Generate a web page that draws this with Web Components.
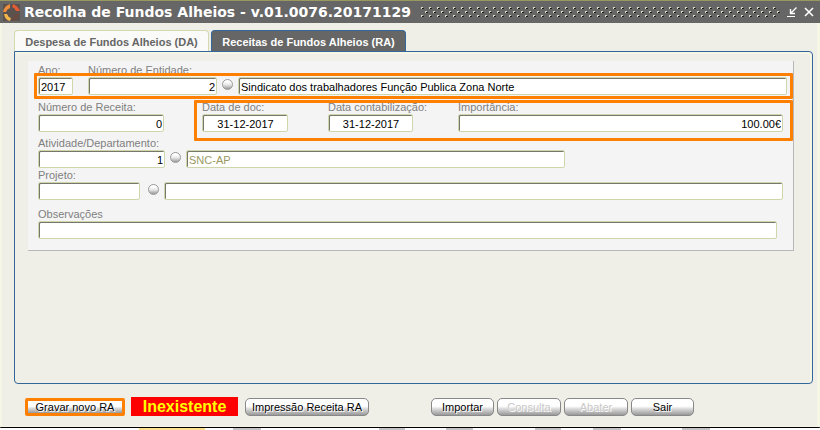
<!DOCTYPE html>
<html lang="pt">
<head>
<meta charset="utf-8">
<title>Recolha de Fundos Alheios</title>
<style>
  body { margin: 0; font-family: "Liberation Sans", Arial, sans-serif; font-size: 11px; background: #fff; }
  .grow { flex: 1; min-width: 0; }
</style>
</head>
<body>
<app-window>
  <title-bar slot="title">Recolha de Fundos Alheios - v.01.0076.20171129</title-bar>
  <tab-panel>
    <form-panel>
      <field-row style="--frame-inset: 10px 0 -4px -4px; --after: 5px; --end: 6px" framed>
        <text-field label="Ano:" value="2017" style="--w: 35px; margin-right: 15px"></text-field>
        <text-field label="Número de Entidade:" value="2" text="right" style="--w: 129px"></text-field>
        <lookup-button label="Procurar entidade"></lookup-button>
        <text-field class="grow" name="Nome da entidade" value="Sindicato dos trabalhadores Função Publica Zona Norte"></text-field>
      </field-row>
      <field-row style="--after: 4px; --end: 10px">
        <text-field label="Número de Receita:" value="0" text="right" style="--w: 126px; margin-right: 38px"></text-field>
        <field-row class="grow" style="--frame-inset: 0 -10px -9px -8px; --after: 0px; --end: 0px" framed>
          <text-field label="Data de doc:" value="31-12-2017" text="center" style="--w: 86px; margin-right: 40px"></text-field>
          <text-field label="Data contabilização:" value="31-12-2017" text="center" style="--w: 85px; margin-right: 45px"></text-field>
          <text-field class="grow" label="Importância:" value="100.00€" text="right"></text-field>
        </field-row>
      </field-row>
      <field-row style="--end: 228px">
        <text-field label="Atividade/Departamento:" value="1" text="right" style="--w: 127px"></text-field>
        <lookup-button label="Procurar departamento"></lookup-button>
        <text-field class="grow" name="Nome do departamento" value="SNC-AP" muted></text-field>
      </field-row>
      <field-row style="--after: 7px; --end: 10px">
        <text-field label="Projeto:" style="--w: 102px; margin-right: 3px"></text-field>
        <lookup-button label="Procurar projeto"></lookup-button>
        <text-field class="grow" name="Nome do projeto"></text-field>
      </field-row>
      <field-row style="--end: 16px">
        <text-field class="grow" label="Observações"></text-field>
      </field-row>
    </form-panel>
  </tab-panel>
  <action-bar slot="actions">
    <action-button style="--w: 100px" marked>Gravar novo RA</action-button>
    <status-label>Inexistente</status-label>
    <action-button style="--w: 124px; margin-right: 59px">Impressão Receita RA</action-button>
    <action-button style="--w: 63px">Importar</action-button>
    <action-button style="--w: 64px" disabled>Consulta</action-button>
    <action-button style="--w: 64px" disabled>Abater</action-button>
    <action-button style="--w: 63px">Sair</action-button>
  </action-bar>
</app-window>

<script>
const define = (name, render) => customElements.define(name, class extends HTMLElement {
  connectedCallback() {
    if (this.shadowRoot) return;
    this.attachShadow({ mode: 'open' }).innerHTML = render(this);
  }
});

define('app-window', () => `
  <style>
    :host { display: flex; flex-direction: column; min-height: 100vh; }
    main { flex: 1; display: flex; flex-direction: column; background: #efefe8;
      border: solid #f6f6e6; border-width: 0 3px 1px 2px; }
    .edge { height: 1px; background: #000; border-radius: 0 0 2px 2px; }
    .behind { height: 2px; background: linear-gradient(90deg,
      #fff 139px, #ffe08c 139px 205px, #fff 205px 233px, #c4c4c4 233px 261px,
      #fff 261px 379px, #c4c4c4 379px 405px, #fff 405px 446px, #c4c4c4 446px 473px,
      #fff 473px 535px, #c4c4c4 535px 561px, #fff 561px 593px, #c4c4c4 593px 621px,
      #fff 621px 682px, #c4c4c4 682px 710px, #fff 710px); }
  </style>
  <slot name="title"></slot>
  <main><slot></slot><slot name="actions"></slot></main>
  <div class="edge"></div><div class="behind"></div>`);

define('title-bar', () => `
  <style>
    :host { display: flex; align-items: center; height: 22px; border-top: 1px solid #99995f;
      background: #666; color: #fff; padding: 0 5px 0 2px; }
    h1 { margin: 0 9px 0 3px; font: bold 14px/22px "DejaVu Sans", Verdana, sans-serif; white-space: nowrap; }
    .grip { flex: 1; height: 12px; min-width: 0; }
    button { all: unset; display: flex; width: 12px; height: 12px; margin-left: 5px; }
  </style>
  <svg width="19" height="19" viewBox="0 0 19 19" aria-hidden="true">
    <rect x="1" y="1" width="17" height="17" fill="#5b514d"/>
    <path d="M8 1 L8 5 Q5 6 4 9 L1 9 Q2 3 8 1Z" fill="#ee8d3d"/>
    <path d="M11 1 Q16 3 18 8 L14 8 Q13 5 10 4Z" fill="#e35c34"/>
    <path d="M2 11 L5 11 Q6 14 9 15 L8 18 Q3 17 2 11Z" fill="#f3b64b"/>
    <path d="M14 11 L17 11 Q16 16 11 18 L10 15 Q13 14 14 11Z" fill="#6d4a40"/>
  </svg>
  <h1><slot></slot></h1>
  <svg class="grip" aria-hidden="true" shape-rendering="crispEdges">
    <defs><pattern id="dots" width="8" height="12" patternUnits="userSpaceOnUse">
      <path d="M1 1h2v2h-2zM5 5h2v2h-2zM1 9h2v2h-2z" fill="#111"/>
      <path d="M1 1h2v1h-1v1h-1zM5 5h2v1h-1v1h-1zM1 9h2v1h-1v1h-1z" fill="#dcdcc6"/>
      <path d="M3 2h1v1h-1zM7 6h1v1h-1zM3 10h1v1h-1z" fill="#222"/>
    </pattern></defs>
    <rect width="100%" height="12" fill="url(#dots)"/>
  </svg>
  <button aria-label="Minimizar"><svg width="12" height="12" viewBox="0 0 12 12" stroke="#fff" fill="none">
    <path d="M10.5 1.5L5 7M4.5 3v4.500h4.500" stroke-width="1.400"/><path d="M1 10.500h8" stroke-width="1"/></svg></button>
  <button aria-label="Fechar"><svg width="12" height="12" viewBox="0 0 12 12" stroke="#fff" fill="none">
    <path d="M2 2l8 8M10 2l-8 8" stroke-width="1.600"/></svg></button>`);

define('tab-panel', () => `
  <style>
    :host { flex: 1; display: flex; flex-direction: column; margin: 7px 4px 0 12px; }
    nav { display: flex; gap: 2px; height: 21px; }
    button { box-sizing: border-box; width: 195px; padding: 0; border: 1px solid #d3d9b0; border-bottom: 0;
      border-radius: 4px 4px 0 0; background: #fafaf8; color: #666; font: bold 11px/22px "Liberation Sans", Arial, sans-serif; white-space: nowrap; }
    button[aria-selected=true] { background: #666; border-color: #336699; color: #fff; }
    section { flex: 1; border: 1px solid #336699; border-radius: 0 4px 4px 4px;
      box-shadow: inset -1px 1px 0 1px #f6f6e6; padding: 9px 18px 0 13px; }
  </style>
  <nav role="tablist">
    <button role="tab" aria-selected="false">Despesa de Fundos Alheios (DA)</button>
    <button role="tab" aria-selected="true">Receitas de Fundos Alheios (RA)</button>
  </nav>
  <section role="tabpanel"><slot></slot></section>`);

define('form-panel', () => `
  <style>
    :host { display: block; background: #f4f4f4; border: solid #b8b8b8; border-width: 0 1px 1px 0; padding: 2px 0 11px 10px; }
  </style><slot></slot>`);

define('field-row', () => `
  <style>
    :host { display: flex; align-items: flex-end; position: relative;
      margin-bottom: var(--after, 0); padding-right: var(--end, 0); --after: initial; --end: initial; }
    :host([framed])::after { content: ""; position: absolute; inset: var(--frame-inset);
      border: 3px solid #ff8000; border-radius: 1px; pointer-events: none; }
  </style><slot></slot>`);

define('text-field', el => {
  const label = el.getAttribute('label') || '';
  return `
  <style>
    :host { display: block; width: var(--w, auto); }
    label { display: block; height: 14px; font-size: 11px; line-height: 14px; color: #808080; white-space: nowrap; }
    input { display: block; box-sizing: border-box; width: 100%; height: 18px; margin: 0; padding: 1px 1px 0 2px;
      border: 1px solid #d0d6ac; border-radius: 2px; background: #fff; box-shadow: inset 1px 1px 0 #77776c;
      font: 11px "Liberation Sans", Arial, sans-serif; color: #000; text-align: ${el.getAttribute('text') || 'left'}; outline: 0; }
    :host([muted]) input { color: #99995f; }
  </style>
  ${label ? `<label for="f">${label}</label>` : ''}
  <input id="f" type="text" value="${el.getAttribute('value') || ''}"${label ? '' : ` aria-label="${el.getAttribute('name')}"`}>`;
});

define('lookup-button', el => `
  <style>
    :host { display: block; padding: 0 5px 5px 5px; }
    button { display: block; box-sizing: border-box; width: 11px; height: 11px; padding: 0; border: 1px solid #999; border-radius: 50%;
      background: linear-gradient(#fff 20%, #e4e4e4 55%, #999); }
  </style><button aria-label="${el.getAttribute('label')}"></button>`);

define('action-bar', () => `
  <style>:host { display: flex; align-items: center; gap: 3px; box-sizing: border-box; height: 42px; padding: 3px 0 0 23px; }</style><slot></slot>`);

define('action-button', el => `
  <style>
    :host { display: block; }
    button { box-sizing: border-box; width: var(--w); height: 18px; padding: 0; border: 1px solid #888; border-radius: 5px;
      background: linear-gradient(#fff 45%, #ddd 60%, #999); color: #000;
      font: 11px/16px "Liberation Sans", Arial, sans-serif; text-shadow: 0 0 1px #fff, 1px 1px 0 #fff; white-space: nowrap; display: block; }
    button:disabled { color: #c8c8c8; }
    :host([marked]) button { border: 3px solid #ff8000; border-radius: 2px; line-height: 12px; }
  </style><button${el.hasAttribute('disabled') ? ' disabled' : ''}><slot></slot></button>`);

define('status-label', () => `
  <style>:host { display: block; width: 107px; margin: 0 4px 0 3px; background: #f00; color: #ff0; font-weight: bold; font-size: 16px; line-height: 19px; text-align: center; }</style><slot></slot>`);
</script>
</body>
</html>
